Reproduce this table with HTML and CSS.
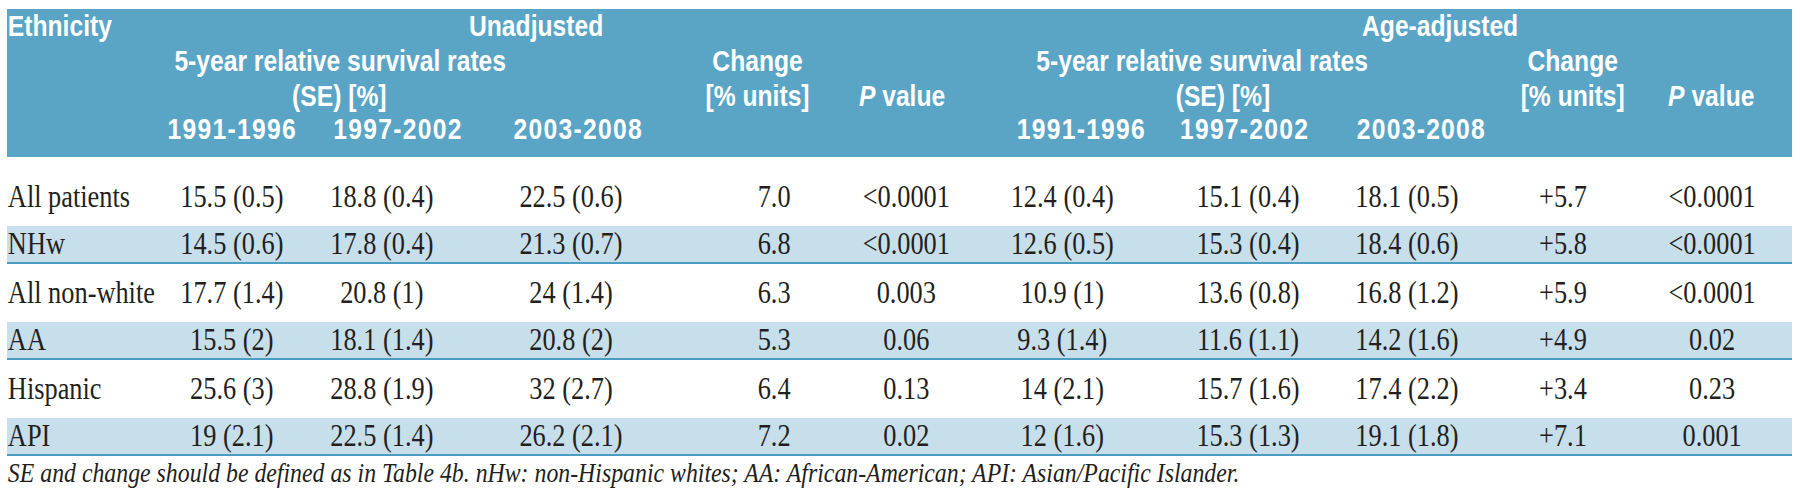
FILE: index.html
```html
<!DOCTYPE html>
<html lang="en">
<head>
<meta charset="utf-8">
<title>Table</title>
<link rel="stylesheet" href="styles.css">
</head>
<body>
<div class="page">
  <div class="sheet">
    <div class="thead">
      <div class="eth">Ethnicity</div>
      <div class="u-title">Unadjusted</div>
      <div class="u-sub1">5-year relative survival rates</div>
      <div class="u-sub2">(SE) [%]</div>
      <div class="u-chg1">Change</div>
      <div class="u-chg2">[% units]</div>
      <div class="u-p"><i>P</i> value</div>
      <div class="yr y1">1991-1996</div>
      <div class="yr y2">1997-2002</div>
      <div class="yr y3">2003-2008</div>
      <div class="a-title">Age-adjusted</div>
      <div class="a-sub1">5-year relative survival rates</div>
      <div class="a-sub2">(SE) [%]</div>
      <div class="a-chg1">Change</div>
      <div class="a-chg2">[% units]</div>
      <div class="a-p"><i>P</i> value</div>
      <div class="yr y4">1991-1996</div>
      <div class="yr y5">1997-2002</div>
      <div class="yr y6">2003-2008</div>
    </div>
    <div class="tbody">
      <div class="row">
        <span class="lab">All patients</span><span>15.5 (0.5)</span><span>18.8 (0.4)</span><span>22.5 (0.6)</span><span>7.0</span><span>&lt;0.0001</span><span>12.4 (0.4)</span><span>15.1 (0.4)</span><span>18.1 (0.5)</span><span>+5.7</span><span>&lt;0.0001</span>
      </div>
      <div class="row alt">
        <span class="lab">NHw</span><span>14.5 (0.6)</span><span>17.8 (0.4)</span><span>21.3 (0.7)</span><span>6.8</span><span>&lt;0.0001</span><span>12.6 (0.5)</span><span>15.3 (0.4)</span><span>18.4 (0.6)</span><span>+5.8</span><span>&lt;0.0001</span>
      </div>
      <div class="row">
        <span class="lab">All non-white</span><span>17.7 (1.4)</span><span>20.8 (1)</span><span>24 (1.4)</span><span>6.3</span><span>0.003</span><span>10.9 (1)</span><span>13.6 (0.8)</span><span>16.8 (1.2)</span><span>+5.9</span><span>&lt;0.0001</span>
      </div>
      <div class="row alt">
        <span class="lab">AA</span><span>15.5 (2)</span><span>18.1 (1.4)</span><span>20.8 (2)</span><span>5.3</span><span>0.06</span><span>9.3 (1.4)</span><span>11.6 (1.1)</span><span>14.2 (1.6)</span><span>+4.9</span><span>0.02</span>
      </div>
      <div class="row">
        <span class="lab">Hispanic</span><span>25.6 (3)</span><span>28.8 (1.9)</span><span>32 (2.7)</span><span>6.4</span><span>0.13</span><span>14 (2.1)</span><span>15.7 (1.6)</span><span>17.4 (2.2)</span><span>+3.4</span><span>0.23</span>
      </div>
      <div class="row alt">
        <span class="lab">API</span><span>19 (2.1)</span><span>22.5 (1.4)</span><span>26.2 (2.1)</span><span>7.2</span><span>0.02</span><span>12 (1.6)</span><span>15.3 (1.3)</span><span>19.1 (1.8)</span><span>+7.1</span><span>0.001</span>
      </div>
    </div>
    <p class="note">SE and change should be defined as in Table 4b. nHw: non-Hispanic whites; AA: African-American; API: Asian/Pacific Islander.</p>
  </div>
</div>
</body>
</html>
```
FILE: styles.css
```css
html, body {
  margin: 0;
  padding: 0;
  overflow: hidden;
  background: #ffffff;
}

body {
  width: 1800px;
  height: 500px;
}

.page {
  padding: 9px 0 0 7px;
}

.sheet {
  width: 2100px;
  transform: scaleX(0.85);
  transform-origin: 0 0;
}

/* ---------- header ---------- */
.thead {
  display: grid;
  grid-template-columns: 184px 162px 33px 162px 50px 162px 49px 162px 8px 162px 49px 162px 30px 162px 46px 162px 16px 162px 1px 162px 14px;
  grid-template-rows: 34px 36px 34px 32px;
  height: 148px;
  background: #5aa5c6;
  color: #ffffff;
  font-family: "Liberation Sans", Arial, sans-serif;
  font-weight: 700;
  font-size: 29px;
  line-height: 34px;
  white-space: nowrap;
}

.thead > div {
  text-align: center;
  align-self: center;
}

.thead .eth {
  grid-column: 1;
  grid-row: 1;
  text-align: left;
  padding-left: 1px;
}

.thead .yr {
  letter-spacing: 1.5px;
}

.u-title { grid-column: 2 / 11; grid-row: 1; padding-right: 73px; }
.u-sub1  { grid-column: 2 / 7;  grid-row: 2; padding-right: 153px; }
.u-sub2  { grid-column: 2 / 7;  grid-row: 3; padding-right: 155px; }
.u-chg1  { grid-column: 8 / 9;  grid-row: 2; }
.u-chg2  { grid-column: 8 / 9;  grid-row: 3; }
.u-p     { grid-column: 10 / 11; grid-row: 3; }
.y1      { grid-column: 2 / 3;  grid-row: 4; }
.y2      { grid-column: 4 / 5;  grid-row: 4; }
.y3      { grid-column: 6 / 7;  grid-row: 4; }

.a-title { grid-column: 12 / 21; grid-row: 1; padding-left: 103px; }
.a-sub1  { grid-column: 12 / 17; grid-row: 2; padding-right: 116px; }
.a-sub2  { grid-column: 12 / 17; grid-row: 3; padding-right: 67px; }
.a-chg1  { grid-column: 18 / 19; grid-row: 2; }
.a-chg2  { grid-column: 18 / 19; grid-row: 3; }
.a-p     { grid-column: 20 / 21; grid-row: 3; }
.y4      { grid-column: 12 / 13; grid-row: 4; }
.y5      { grid-column: 14 / 15; grid-row: 4; }
.y6      { grid-column: 16 / 17; grid-row: 4; }

/* ---------- body ---------- */
.tbody {
  margin-top: 16px;
  font-family: "Liberation Serif", "Times New Roman", serif;
  font-size: 31px;
  color: #231f20;
}

.row {
  display: grid;
  grid-template-columns: 168px 193px 160px 285px 193px 118px 249px 188px 186px 181px 170px 9px;
  height: 48px;
  align-items: center;
  white-space: nowrap;
}

.row > span {
  text-align: center;
}

.row > .lab {
  text-align: left;
  padding-left: 1px;
}

.row.alt {
  box-sizing: border-box;
  height: 38px;
  margin: 5px 0;
  background: #c7deeb;
  border-bottom: 2px solid #4c9dc1;
}

/* ---------- footnote ---------- */
.note {
  margin: 0;
  padding-left: 1px;
  font-family: "Liberation Serif", "Times New Roman", serif;
  font-style: italic;
  font-size: 28px;
  line-height: 24px;
  color: #231f20;
  white-space: nowrap;
}
```
